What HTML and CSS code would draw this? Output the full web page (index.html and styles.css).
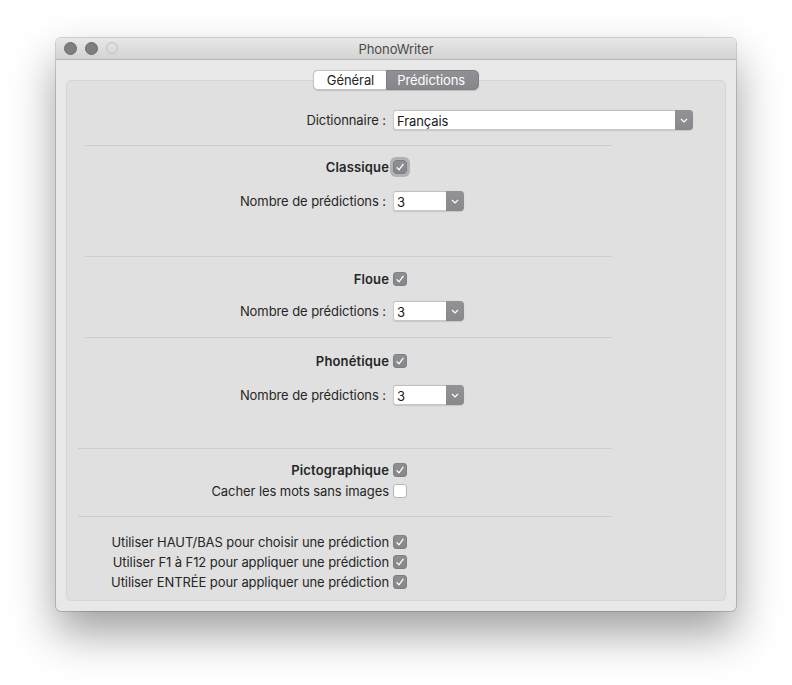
FILE: index.html
```html
<!DOCTYPE html>
<html lang="fr">
<head>
<meta charset="utf-8">
<title>PhonoWriter</title>
<link rel="stylesheet" href="styles.css">
</head>
<body>
<div class="window">
  <div class="titlebar">
    <div class="lights">
      <span class="light"></span><span class="light"></span><span class="light off"></span>
    </div>
    <div class="title">PhonoWriter</div>
    <div></div>
  </div>
  <div class="content">
    <div class="tabs">
      <span class="tab">Général</span><span class="tab active">Prédictions</span>
    </div>
    <div class="group">
      <div class="row r-dict">
        <span class="lbl plbl">Dictionnaire :</span>
        <div class="popup wide"><span class="pv">Français</span><span class="chev"><svg width="8" height="5" viewBox="0 0 8 5"><path d="M1 1 L4 4 L7 1" fill="none" stroke="#fff" stroke-width="1.2"/></svg></span></div>
      </div>
      <div class="sep s1"></div>
      <div class="row r-c1">
        <span class="lbl bold">Classique</span>
        <span class="cb on focus"><svg width="14" height="14" viewBox="0 0 14 14"><path d="M3.6 7.4 L6 9.8 L10.4 3.8" fill="none" stroke="#fff" stroke-width="1.3"/></svg></span>
      </div>
      <div class="row r-n1">
        <span class="lbl plbl">Nombre de prédictions :</span>
        <div class="popup small"><span class="pv">3</span><span class="chev"><svg width="8" height="5" viewBox="0 0 8 5"><path d="M1 1 L4 4 L7 1" fill="none" stroke="#fff" stroke-width="1.2"/></svg></span></div>
      </div>
      <div class="sep s2"></div>
      <div class="row r-c2">
        <span class="lbl bold">Floue</span>
        <span class="cb on"><svg width="14" height="14" viewBox="0 0 14 14"><path d="M3.6 7.4 L6 9.8 L10.4 3.8" fill="none" stroke="#fff" stroke-width="1.3"/></svg></span>
      </div>
      <div class="row r-n2">
        <span class="lbl plbl">Nombre de prédictions :</span>
        <div class="popup small"><span class="pv">3</span><span class="chev"><svg width="8" height="5" viewBox="0 0 8 5"><path d="M1 1 L4 4 L7 1" fill="none" stroke="#fff" stroke-width="1.2"/></svg></span></div>
      </div>
      <div class="sep s3"></div>
      <div class="row r-c3">
        <span class="lbl bold">Phonétique</span>
        <span class="cb on"><svg width="14" height="14" viewBox="0 0 14 14"><path d="M3.6 7.4 L6 9.8 L10.4 3.8" fill="none" stroke="#fff" stroke-width="1.3"/></svg></span>
      </div>
      <div class="row r-n3">
        <span class="lbl plbl">Nombre de prédictions :</span>
        <div class="popup small"><span class="pv">3</span><span class="chev"><svg width="8" height="5" viewBox="0 0 8 5"><path d="M1 1 L4 4 L7 1" fill="none" stroke="#fff" stroke-width="1.2"/></svg></span></div>
      </div>
      <div class="sep s4"></div>
      <div class="row r-c4">
        <span class="lbl bold">Pictographique</span>
        <span class="cb on"><svg width="14" height="14" viewBox="0 0 14 14"><path d="M3.6 7.4 L6 9.8 L10.4 3.8" fill="none" stroke="#fff" stroke-width="1.3"/></svg></span>
      </div>
      <div class="row r-tight">
        <span class="lbl">Cacher les mots sans images</span>
        <span class="cb"></span>
      </div>
      <div class="sep s5"></div>
      <div class="row r-u1">
        <span class="lbl">Utiliser HAUT/BAS pour choisir une prédiction</span>
        <span class="cb on"><svg width="14" height="14" viewBox="0 0 14 14"><path d="M3.6 7.4 L6 9.8 L10.4 3.8" fill="none" stroke="#fff" stroke-width="1.3"/></svg></span>
      </div>
      <div class="row">
        <span class="lbl">Utiliser F1 à F12 pour appliquer une prédiction</span>
        <span class="cb on"><svg width="14" height="14" viewBox="0 0 14 14"><path d="M3.6 7.4 L6 9.8 L10.4 3.8" fill="none" stroke="#fff" stroke-width="1.3"/></svg></span>
      </div>
      <div class="row">
        <span class="lbl">Utiliser ENTRÉE pour appliquer une prédiction</span>
        <span class="cb on"><svg width="14" height="14" viewBox="0 0 14 14"><path d="M3.6 7.4 L6 9.8 L10.4 3.8" fill="none" stroke="#fff" stroke-width="1.3"/></svg></span>
      </div>
    </div>
  </div>
</div>
</body>
</html>
```
FILE: styles.css
```css
html, body {
  margin: 0;
  padding: 0;
  background: #ffffff;
}
body {
  font-family: Inter, "Liberation Sans", Arial, sans-serif;
  font-size: 13px;
  letter-spacing: -0.08px;
  color: #262626;
  padding: 38px 0 0 56px;
  min-height: 685px;
  box-sizing: border-box;
}
.window {
  width: 680px;
  border-radius: 5px;
  background: #e8e8e8;
  box-shadow: 0 0 0 1px rgba(0,0,0,0.16), 0 22px 45px rgba(0,0,0,0.38);
  overflow: hidden;
}
.titlebar {
  height: 21px;
  border-bottom: 1px solid #b6b6b6;
  background: linear-gradient(#e9e8e9, #d4d3d4);
  display: grid;
  grid-template-columns: 1fr auto 1fr;
  align-items: center;
}
.lights {
  display: flex;
  gap: 8px;
  padding-left: 8px;
}
.light {
  width: 11px;
  height: 11px;
  border-radius: 50%;
  background: #7e7d82;
  border: 0.5px solid #6c6b70;
}
.light.off {
  background: transparent;
  border: 1px solid #c2c2c2;
  width: 10px;
  height: 10px;
}
.title {
  color: #4a4a4a;
  font-size: 13px;
}
.content {
  padding: 10px 10px 10px;
}
.tabs {
  display: flex;
  justify-content: center;
  margin-bottom: -10px;
  position: relative;
  z-index: 1;
}
.tab {
  height: 20px;
  box-sizing: border-box;
  line-height: 19px;
  padding: 0 12px 0 13px;
  background: #ffffff;
  border: 1px solid #c3c3c3;
  border-right: none;
  border-radius: 5px 0 0 5px;
  color: #252525;
  box-shadow: 0 0.5px 1px rgba(0,0,0,0.15);
}
.tab.active {
  background: linear-gradient(#918f95, #87868b);
  border: 1px solid #807f84;
  border-radius: 0 5px 5px 0;
  color: #ffffff;
  padding: 0 13px 0 10px;
}
.group {
  background: #e0e0e0;
  border: 1px solid #d5d5d5;
  border-radius: 5px;
  height: 521px;
  box-sizing: border-box;
  padding-top: 29px;
  display: flex;
  flex-direction: column;
}
.row {
  display: grid;
  grid-template-columns: 322px auto;
  column-gap: 4px;
  align-items: center;
  height: 20px;
}
.lbl {
  text-align: right;
  white-space: nowrap;
}
.plbl {
  padding-right: 3px;
}
.bold {
  font-weight: 600;
  letter-spacing: 0.15px;
}
.sep {
  height: 1px;
  background: #cdcdcd;
  margin-left: 18px;
  width: 527px;
}
.s4, .s5 {
  margin-left: 11px;
  width: 534px;
}
.s1 { margin-top: 15px; }
.r-c1 { margin-top: 11px; }
.r-n1 { margin-top: 14px; }
.s2 { margin-top: 45px; }
.r-c2 { margin-top: 12px; }
.r-n2 { margin-top: 12px; }
.s3 { margin-top: 16px; }
.r-c3 { margin-top: 13px; }
.r-n3 { margin-top: 14px; }
.s4 { margin-top: 43px; }
.r-c4 { margin-top: 11px; }
.r-tight { margin-top: 1px; }
.s5 { margin-top: 15px; }
.r-u1 { margin-top: 15px; }

.cb {
  width: 14px;
  height: 14px;
  box-sizing: border-box;
  border-radius: 3px;
  background: #ffffff;
  border: 1px solid #b5b5b5;
  display: block;
}
.cb.on {
  background: linear-gradient(#8f8e93, #87868b);
  border: 1px solid #7f7e83;
}
.cb svg {
  display: block;
  margin: -1px;
}
.cb.focus {
  box-shadow: 0 0 0 3px rgba(140,139,145,0.55);
}
.popup {
  height: 20px;
  box-sizing: border-box;
  background: #ffffff;
  border: 1px solid #c9c9c9;
  border-top-color: #c0c0c0;
  border-radius: 3px 4px 4px 3px;
  display: flex;
  align-items: stretch;
  box-shadow: 0 0.5px 1px rgba(0,0,0,0.12);
}
.popup.wide { width: 300px; }
.popup.small { width: 71px; }
.pv {
  flex: 1;
  padding-left: 3px;
  line-height: 20px;
  color: #1a1a1a;
}
.chev {
  width: 18px;
  margin: -1px -1px -1px 0;
  background: linear-gradient(#939297, #88878c);
  border-radius: 0 4px 4px 0;
  display: flex;
  align-items: center;
  justify-content: center;
}
.chev svg { display: block; }
```
